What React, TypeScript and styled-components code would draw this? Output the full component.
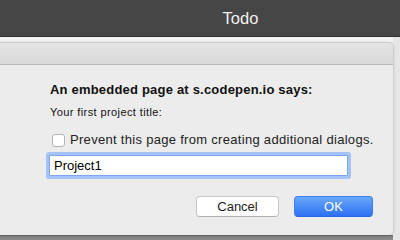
import React from 'react';
import styled, { createGlobalStyle } from 'styled-components';

const GlobalStyle = createGlobalStyle`
  html, body {
    margin: 0;
    padding: 0;
    width: 400px;
    height: 240px;
    overflow: hidden;
    background: #e9e9e9;
    font-family: "Liberation Sans", Arial, sans-serif;
  }
`;

export default function App() {
    return (
        <>
            <GlobalStyle />
            <Styled.Window>
                <Styled.TitleBar>Todo</Styled.TitleBar>
                <Styled.Stage>
                    <Styled.Column>
                        <Styled.Gap />
                        <Styled.Dialog>
                            <Styled.DialogHeader />
                            <Styled.Body>
                                <Styled.Heading>An embedded page at s.codepen.io says:</Styled.Heading>
                                <Styled.Message>Your first project title:</Styled.Message>
                                <Styled.CheckRow>
                                    <Styled.CheckBox />
                                    <Styled.CheckLabel>Prevent this page from creating additional dialogs.</Styled.CheckLabel>
                                </Styled.CheckRow>
                                <Styled.Input defaultValue="Project1" />
                                <Styled.Buttons>
                                    <Styled.Button>Cancel</Styled.Button>
                                    <Styled.Button $primary>OK</Styled.Button>
                                </Styled.Buttons>
                            </Styled.Body>
                        </Styled.Dialog>
                        <Styled.BottomStrip />
                    </Styled.Column>
                    <Styled.Gutter />
                </Styled.Stage>
            </Styled.Window>
        </>
    );
}

const Styled = {
    Window: styled.div`
    display: flex;
    flex-direction: column;
    width: 400px;
    height: 240px;
  `,
    TitleBar: styled.div`
    display: flex;
    align-items: center;
    justify-content: center;
    height: 36px;
    padding-left: 81px;
    background: #464646;
    border-bottom: 1px solid #2f2f2f;
    color: #f2f2f2;
    font-size: 16.5px;
    padding-top: 1px;
    box-sizing: content-box;
    height: 35px;
  `,
    Stage: styled.div`
    display: flex;
    flex: 1;
  `,
    Column: styled.div`
    display: flex;
    flex-direction: column;
    flex: 1;
  `,
    Gap: styled.div`
    height: 5px;
    background: #f3f3f3;
    border-bottom: 1px solid #e2e2e2;
  `,
    Dialog: styled.div`
    display: flex;
    flex-direction: column;
    height: 192px;
    background: #ececec;
    border-radius: 0 5px 5px 0;
    box-shadow: 0 0 3px rgba(0, 0, 0, 0.3);
    position: relative;
    z-index: 1;
    overflow: hidden;
  `,
    DialogHeader: styled.div`
    height: 21px;
    background: linear-gradient(#e4e4e4, #d9d9d9);
    border-bottom: 1px solid #b9b9b9;
  `,
    Body: styled.div`
    display: flex;
    flex-direction: column;
    align-items: flex-start;
    padding: 17px 0 0 50px;
    color: #111;
  `,
    Heading: styled.div`
    font-size: 13px;
    line-height: 16px;
    font-weight: bold;
    letter-spacing: 0.2px;
  `,
    Message: styled.div`
    margin-top: 7px;
    font-size: 11px;
    line-height: 14px;
    letter-spacing: 0.4px;
  `,
    CheckRow: styled.div`
    display: flex;
    align-items: center;
    height: 14px;
    margin-top: 14px;
    margin-left: 2px;
    gap: 5px;
  `,
    CheckBox: styled.span`
    width: 11px;
    height: 11px;
    background: #fff;
    border: 1px solid #b4b4b4;
    border-radius: 3px;
  `,
    CheckLabel: styled.span`
    font-size: 13px;
    line-height: 14px;
    letter-spacing: 0.3px;
    color: #222;
  `,
    Input: styled.input`
    box-sizing: border-box;
    width: 299px;
    height: 21px;
    margin: 8px 0 0 -1px;
    padding: 0 0 0 4px;
    border: 1px solid #7ea6ec;
    border-radius: 1px;
    box-shadow: 0 0 0 3px #a4c3f6;
    background: #fff;
    font-family: "Liberation Sans", Arial, sans-serif;
    font-size: 13px;
    color: #000;
    outline: none;
  `,
    Buttons: styled.div`
    display: flex;
    align-self: stretch;
    justify-content: flex-end;
    gap: 15px;
    margin-top: 20px;
    padding-right: 20px;
  `,
    Button: styled.button<{ $primary?: boolean }>`
    box-sizing: border-box;
    width: ${p => (p.$primary ? '79px' : '83px')};
    height: 21px;
    padding: 0;
    border-radius: 4px;
    font-family: "Liberation Sans", Arial, sans-serif;
    font-size: 13px;
    color: ${p => (p.$primary ? '#fff' : '#222')};
    border: 1px solid ${p => (p.$primary ? '#3d7ff0' : '#c6c6c6')};
    border-bottom-color: ${p => (p.$primary ? '#2a63e6' : '#b0b0b0')};
    background: ${p => (p.$primary ? 'linear-gradient(#6aa8f9, #2f70f5)' : '#fff')};
  `,
    BottomStrip: styled.div`
    flex: 1;
    background: linear-gradient(#6a6a6a, #858585 40%, #8a8a8a);
  `,
    Gutter: styled.div`
    width: 7px;
    background: #e6e6e6;
  `,
};
